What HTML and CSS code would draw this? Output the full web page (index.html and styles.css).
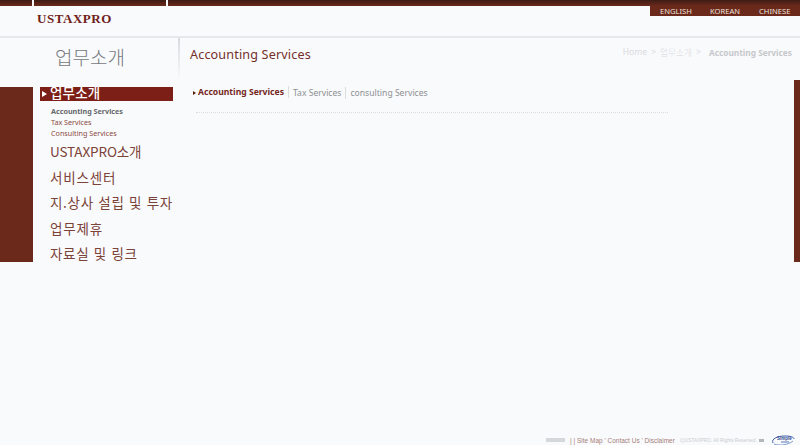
FILE: index.html
```html
<!DOCTYPE html>
<html lang="ko">
<head>
<meta charset="utf-8">
<title>USTAXPRO</title>
<link rel="stylesheet" href="styles.css">
</head>
<body>
<div class="page">
  <div class="topbar"><span class="seg seg-a"></span><span class="seg seg-b"></span><span class="seg seg-c"></span></div>
  <header class="header">
    <div class="logo">USTAXPRO</div>
    <nav class="langs"><a>ENGLISH</a><a>KOREAN</a><a>CHINESE</a></nav>
  </header>
  <section class="titles">
    <div class="section-title">업무소개</div>
    <div class="page-title">
      <h1>Accounting Services</h1>
      <div class="crumbs"><span>Home</span><span>&gt;</span><span class="crumb-ko">업무소개</span><span>&gt;</span><b>Accounting Services</b></div>
    </div>
  </section>
  <main class="main">
    <div class="side-block"></div>
    <nav class="menu">
      <div class="menu-active"><span class="tri"></span><span class="active-label">업무소개</span></div>
      <ul class="submenu">
        <li class="sub-on">Accounting Services</li>
        <li>Tax Services</li>
        <li>Consulting Services</li>
      </ul>
      <a class="menu-item m1">USTAXPRO소개</a>
      <a class="menu-item m2">서비스센터</a>
      <a class="menu-item wide">지.상사 설립 및 투자</a>
      <a class="menu-item m2">업무제휴</a>
      <a class="menu-item wide">자료실 및 링크</a>
    </nav>
    <div class="content">
      <div class="tabs">
        <span class="tri small"></span><b class="tab-on">Accounting Services</b><span class="tab">Tax Services</span><span class="tab">consulting Services</span>
      </div>
      <div class="dots"></div>
    </div>
    <div class="right-bar"></div>
  </main>
  <footer class="footer">
    <span class="f-block"></span>
    <span class="f-links">| | Site Map ' Contact Us ' Disclaimer</span>
    <span class="f-copy">ⓒUSTAXPRO. All Rights Reserved.</span>
    <span class="f-mini"></span>
    <svg class="f-logo" width="24" height="11" viewBox="0 0 24 11"><path d="M2 8C0 4 6 1 14 1c5 0 9 1 9 3" fill="none" stroke="#3a5ca8" stroke-width="1"/><path d="M3 9c6 2 14 1 19-3" fill="none" stroke="#7f9bd0" stroke-width="1"/><text x="6" y="5" class="f-logo-text">Simple</text><rect x="10" y="6" width="8" height="2" fill="#a9b8d8"/></svg>
  </footer>
</div>
</body>
</html>
```

FILE: styles.css
```css
* { box-sizing: border-box; }
html, body { margin: 0; padding: 0; }
body { background: #f9fafc; font-family: "Noto Sans", "Noto Sans CJK KR", sans-serif; overflow: hidden; }
.page { width: 800px; height: 445px; display: flex; flex-direction: column; }

.topbar { height: 6px; display: flex; gap: 2px; }
.seg { display: block; height: 6px; background: linear-gradient(#3d1c14, #6b2a1c); }
.seg-a { width: 32px; }
.seg-b { width: 132px; }
.seg-c { flex: 1; }

.header { height: 32px; display: flex; justify-content: space-between; align-items: flex-start; border-bottom: 2px solid #e6e7ea; }
.logo { margin: 6px 0 0 37px; font-family: "Liberation Serif", serif; font-weight: 700; font-size: 13px; letter-spacing: .55px; line-height: 13px; color: #6f2219; }
.langs { width: 150px; height: 10px; background: #6b291b; display: flex; color: #eee3df; font-size: 7.6px; line-height: 11px; padding-left: 10px; }
.langs a:nth-child(1) { width: 50px; }
.langs a:nth-child(2) { width: 49px; }

.titles { height: 42px; display: flex; }
.section-title { width: 178px; padding: 7px 0 0 55px; font-size: 19px; line-height: 24px; color: #77797c; font-family: "Noto Sans CJK KR", sans-serif; font-weight: 300; }
.page-title { flex: 1; display: flex; justify-content: space-between; padding: 5px 8px 0 10px; border-left: 2px solid; border-image: linear-gradient(#d9dadd, #f9fafc) 1; }
.page-title h1 { margin: 0; font-size: 12.6px; line-height: 24px; font-weight: 400; color: #74302a; letter-spacing: .15px; }
.crumbs { margin-top: 1px; display: flex; gap: 4px; font-size: 8.6px; line-height: 17px; color: #d9dbde; }
.crumb-ko { font-family: "Noto Sans CJK KR", sans-serif; font-size: 8.7px; font-weight: 300; }
.crumbs b { margin-left: 4px; font-size: 8.3px; color: #c6c8cb; }

.main { height: 182px; display: flex; position: relative; }
.side-block { width: 33px; margin-top: 7px; background: #6b291b; flex: none; }
.menu { width: 145px; flex: none; padding: 7px 0 0 7px; }
.menu-active { width: 133px; height: 14px; background: #7c1f17; color: #fff; font-family: "Noto Sans CJK KR", sans-serif; font-size: 13.5px; line-height: 13px; display: flex; align-items: center; padding-left: 2px; gap: 3px; letter-spacing: .2px; }
.active-label { position: relative; top: -2px; font-weight: 500; }
.tri { width: 0; height: 0; border-left: 5px solid #fff; border-top: 3px solid transparent; border-bottom: 3px solid transparent; flex: none; }
.submenu { list-style: none; margin: 5px 0 0 11px; padding: 0; font-size: 7.2px; line-height: 11px; color: #8c4a3e; }
.sub-on { color: #66686b; font-weight: 700; }
.menu-item { display: block; margin: 0 0 0 10px; height: 25.5px; font-family: "Noto Sans CJK KR", "Noto Sans", sans-serif; font-size: 13.5px; line-height: 25px; color: #7b4238; font-weight: 400; }
.menu-item.m1 { margin-top: 0; letter-spacing: -.15px; }
.menu-item.m2 { letter-spacing: .8px; }
.menu-item.wide { letter-spacing: .7px; }

.content { flex: 1; padding: 0 0 0 15px; }
.tabs { display: flex; align-items: center; height: 24px; padding-top: 1px; }
.tri.small { border-left: 3px solid #5a1d14; border-top-width: 2px; border-bottom-width: 2px; margin-right: 2px; }
.tab-on { font-size: 8.6px; line-height: 12px; color: #74261c; padding-right: 4px; border-right: 1px solid #dcdcdc; position: relative; top: -1px; }
.tab { font-size: 8.6px; line-height: 12px; color: #8d8f92; padding: 0 4px; border-right: 1px solid #dcdcdc; }
.tab:last-child { border-right: 0; }
.dots { margin: 8px 0 0 3px; width: 472px; border-top: 1px dotted #dcdde0; }
.right-bar { position: absolute; right: 0; top: 0; width: 6px; bottom: 0; background: #6b291b; }

.footer { margin-top: auto; height: 10px; display: flex; align-items: center; padding-left: 546px; font-family: "Liberation Sans", sans-serif; }
.f-block { width: 19px; height: 4px; background: #d6d7da; margin-right: 5px; }
.f-links { font-size: 6.5px; color: #a58079; margin-right: 5px; white-space: nowrap; }
.f-copy { font-size: 4.8px; color: #c9cbce; white-space: nowrap; }
.f-mini { width: 5px; height: 3px; background: #b5b6b9; margin: 0 7px 0 2px; }
.f-logo { flex: none; }
.f-logo-text { font-family: "Liberation Sans", sans-serif; font-size: 4.5px; font-weight: 700; fill: #2f4c8f; }
```
